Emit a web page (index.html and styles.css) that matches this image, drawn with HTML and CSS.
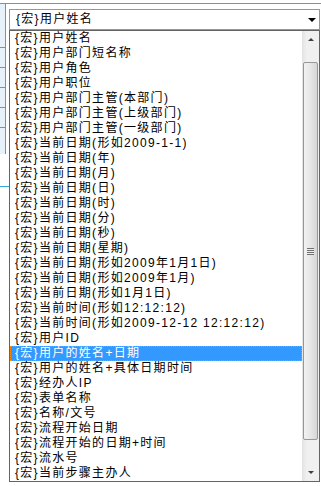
FILE: index.html
```html
<!DOCTYPE html>
<html>
<head>
    <title>宏控件</title>
    <meta charset="UTF-8">
    <link rel="stylesheet" href="styles.css">
</head>
<body>
    <div class="form">
        <div class="top-line"></div>
        <div class="form-row">
            <div class="side">
                <div class="side-box">
                    <div class="side-cell c1"></div>
                    <div class="side-cell"></div>
                    <div class="side-cell"></div>
                    <div class="side-cell"></div>
                    <div class="side-cell"></div>
                    <div class="side-cell c6"></div>
                </div>
                <div class="side-tail"></div>
            </div>
            <div class="select">
                <span class="select-text">{宏}用户姓名</span>
                <span class="select-arrow"></span>
            </div>
        </div>
    </div>

    <!-- 展开的下拉列表 -->
    <div class="dropdown">
        <ul class="options">
            <li>{宏}用户姓名</li>
            <li>{宏}用户部门短名称</li>
            <li>{宏}用户角色</li>
            <li>{宏}用户职位</li>
            <li>{宏}用户部门主管(本部门)</li>
            <li>{宏}用户部门主管(上级部门)</li>
            <li>{宏}用户部门主管(一级部门)</li>
            <li>{宏}当前日期(形如2009-1-1)</li>
            <li>{宏}当前日期(年)</li>
            <li>{宏}当前日期(月)</li>
            <li>{宏}当前日期(日)</li>
            <li>{宏}当前日期(时)</li>
            <li>{宏}当前日期(分)</li>
            <li>{宏}当前日期(秒)</li>
            <li>{宏}当前日期(星期)</li>
            <li>{宏}当前日期(形如2009年1月1日)</li>
            <li>{宏}当前日期(形如2009年1月)</li>
            <li>{宏}当前日期(形如1月1日)</li>
            <li>{宏}当前时间(形如12:12:12)</li>
            <li>{宏}当前时间(形如2009-12-12 12:12:12)</li>
            <li>{宏}用户ID</li>
            <li class="selected">{宏}用户的姓名+日期</li>
            <li>{宏}用户的姓名+具体日期时间</li>
            <li>{宏}经办人IP</li>
            <li>{宏}表单名称</li>
            <li>{宏}名称/文号</li>
            <li>{宏}流程开始日期</li>
            <li>{宏}流程开始的日期+时间</li>
            <li>{宏}流水号</li>
            <li>{宏}当前步骤主办人</li>
        </ul>
        <div class="scrollbar">
            <div class="sb-btn"><span class="sb-up"></span></div>
            <div class="sb-track">
                <div class="sb-thumb">
                    <span class="grip"></span>
                </div>
            </div>
            <div class="sb-btn"><span class="sb-down"></span></div>
        </div>
    </div>
</body>
</html>
```

FILE: styles.css
```css
body {
    margin: 0;
    background: #fff;
    font-family: "Liberation Sans", "Noto Sans CJK SC", sans-serif;
    font-size: 12px;
    letter-spacing: 1.3px;
    color: #000;
}
.form {
    padding-top: 3px;
}
.top-line {
    height: 1px;
    background: #36a9e1;
}
.form-row {
    display: flex;
}
.side {
    width: 9px;
    flex-shrink: 0;
}
.side-box {
    width: 5px;
    background: #e6f1fa;
    border-right: 1px solid #36a9e1;
}
.side-cell {
    height: 19px;
    border-bottom: 1px solid #36a9e1;
}
.side-cell.c1 {
    height: 43px;
}
.side-cell.c6 {
    height: 26px;
    border-bottom: none;
}
.side-tail {
    height: 32px;
    border-bottom: 1px solid #36a9e1;
}
.select {
    margin-top: 5px;
    width: 303px;
    height: 19px;
    border: 1px solid #7f9db9;
    display: flex;
    align-items: center;
    justify-content: space-between;
    padding-left: 6px;
    box-sizing: content-box;
    align-self: flex-start;
}
.select-text {
    line-height: 19px;
}
.select-arrow {
    width: 0;
    height: 0;
    margin-right: 3px;
    border-left: 4px solid transparent;
    border-right: 4px solid transparent;
    border-top: 4px solid #000;
}
.dropdown {
    position: absolute;
    left: 9px;
    top: 30px;
    width: 309px;
    height: 450px;
    border: 1px solid #646464;
    background: #fff;
    display: flex;
}
.options {
    list-style: none;
    margin: 0;
    padding: 0;
    flex: 1;
}
.options li {
    height: 15px;
    line-height: 15px;
    padding-left: 5px;
    white-space: nowrap;
}
.options li.selected {
    background: #3399ff;
    color: #fff;
    outline: 1px dotted #ff8c00;
    outline-offset: -1px;
}
.scrollbar {
    width: 17px;
    display: flex;
    flex-direction: column;
    background: linear-gradient(to right, #e3e3e3, #f0f0f0 30%, #f0f0f0);
}
.sb-btn {
    height: 17px;
    display: flex;
    align-items: center;
    justify-content: center;
    flex-shrink: 0;
}
.sb-up, .sb-down {
    width: 0;
    height: 0;
    border-left: 3px solid transparent;
    border-right: 3px solid transparent;
}
.sb-up {
    border-bottom: 3px solid #404040;
}
.sb-down {
    border-top: 3px solid #404040;
}
.sb-track {
    flex: 1;
    padding: 14px 0 24px;
    display: flex;
}
.sb-thumb {
    flex: 1;
    margin: 0 1px;
    border: 1px solid #979797;
    border-radius: 2px;
    background: linear-gradient(to right, #f2f2f2, #e6e6e6 50%, #d6d6d6);
    display: flex;
    align-items: center;
    justify-content: center;
}
.grip {
    width: 7px;
    height: 7px;
    background: repeating-linear-gradient(to bottom, #6f6f6f 0 1px, #eeeeee 1px 2px);
}
```
